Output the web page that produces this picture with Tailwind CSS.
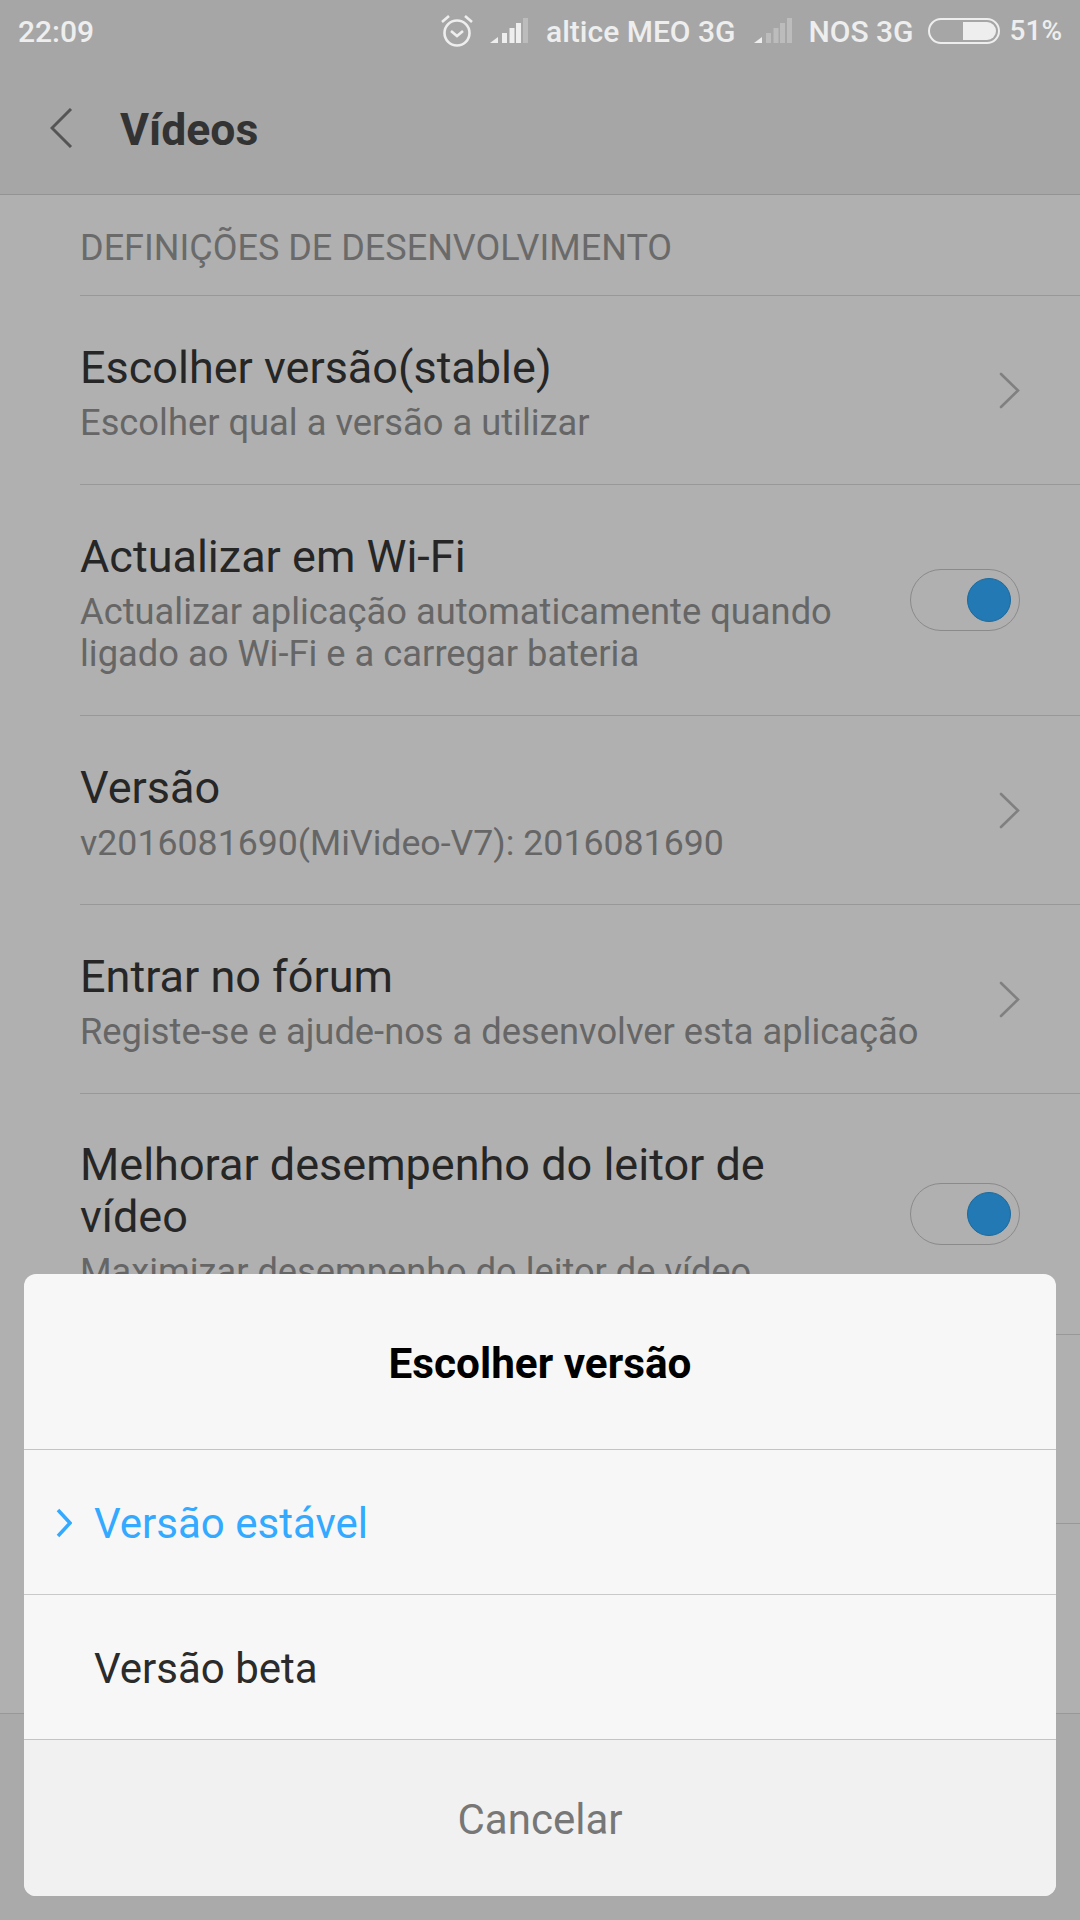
<!DOCTYPE html>
<html><head><meta charset="utf-8"><script src="https://cdn.jsdelivr.net/npm/@tailwindcss/browser@4"></script></head>
<body class="m-0">
<div class="relative w-[1080px] h-[1920px] overflow-hidden bg-[#b0b0b0] font-['Roboto',sans-serif] flex flex-col">
  <div class="h-[195px] shrink-0 bg-[#a6a6a6] border-b border-[#939393]">
    <div class="h-[60px] flex items-center pl-[18px] pr-[18px] pt-[2px] text-[#eeeeee] font-medium">
      <span class="text-[30px]">22:09</span>
      <div class="ml-auto flex items-center">
        <svg class="w-[34px] h-[34px] mr-[16px]" viewBox="0 0 34 34" fill="none" stroke="#eeeeee" stroke-width="2.6"><circle cx="17" cy="19" r="12.5"/><path d="m11 17 6 5 6-5M2 8l7-6M32 8l-7-6"/></svg>
        <svg class="w-[38px] h-[26px] mr-[18px]" viewBox="0 0 38 26" fill="#eeeeee"><path d="M0 25 8 19V25Z"/><rect x="12" y="15" width="5" height="10"/><rect x="19.500" y="10" width="5" height="15"/><rect x="26" y="5" width="5" height="20"/><rect x="33" y="0" width="5" height="25" opacity=".3"/></svg>
        <span class="text-[30px]">altice MEO 3G</span>
        <svg class="w-[38px] h-[26px] ml-[19px] mr-[16px]" viewBox="0 0 38 26" fill="#eeeeee"><path d="M0 25 8 19V25Z"/><rect x="12" y="15" width="5" height="10" opacity=".3"/><rect x="19.500" y="10" width="5" height="15" opacity=".3"/><rect x="26" y="5" width="5" height="20" opacity=".3"/><rect x="33" y="0" width="5" height="25" opacity=".3"/></svg>
        <span class="text-[30px]">NOS 3G</span>
        <div class="ml-[14px] mr-[10px] w-[72px] h-[26px] rounded-full border-2 border-[#eeeeee] p-[2px] flex justify-end"><div class="w-[33px] h-full bg-[#eeeeee] rounded-r-full"></div></div>
        <span class="text-[28px]">51%</span>
      </div>
    </div>
    <div class="h-[134px] flex items-center pl-[50px]">
      <svg class="w-[23px] h-[40px] mt-[2px]" viewBox="0 0 23 40" fill="none" stroke="#555" stroke-width="3"><path d="M21 1 2 20l19 19"/></svg>
      <span class="ml-[47px] pt-[7px] text-[44.500px] font-bold text-[#333]">Vídeos</span>
    </div>
  </div>
  <div class="pl-[80px] shrink-0">
    <div class="h-[101px] flex items-center border-b border-[#989898] text-[36px] text-[#6a6a6a] pt-[5px]">DEFINIÇÕES DE DESENVOLVIMENTO</div>
    <div class="h-[189px] pr-[60px] flex items-center justify-between border-b border-[#989898]">
      <div class="pt-[6px]"><div class="text-[45px] leading-[52px] text-[#262626]">Escolher versão(stable)</div><div class="text-[36.300px] leading-[42px] mt-[8px] text-[#666]">Escolher qual a versão a utilizar</div></div>
      <svg class="w-[21px] h-[37px]" viewBox="0 0 21 37" fill="none" stroke="#808080" stroke-width="2.6" stroke-linecap="round"><path d="m2 2 17 16.500L2 35"/></svg>
    </div>
    <div class="h-[231px] pr-[60px] flex items-center justify-between border-b border-[#989898]">
      <div class="pt-[6px]"><div class="text-[45px] leading-[52px] text-[#262626]">Actualizar em Wi-Fi</div><div class="text-[36.300px] leading-[42px] mt-[8px] text-[#666]">Actualizar aplicação automaticamente quando<br>ligado ao Wi-Fi e a carregar bateria</div></div>
      <div class="w-[110px] h-[62px] rounded-full border border-[#8a8a8a] flex items-center justify-end pr-[8px]"><div class="w-[44px] h-[44px] rounded-full bg-[#2279b3] border border-[#1c6a9e]"></div></div>
    </div>
    <div class="h-[189px] pr-[60px] flex items-center justify-between border-b border-[#989898]">
      <div class="pt-[6px]"><div class="text-[45px] leading-[52px] text-[#262626]">Versão</div><div class="text-[35.700px] leading-[42px] mt-[8px] text-[#666]">v2016081690(MiVideo-V7): 2016081690</div></div>
      <svg class="w-[21px] h-[37px]" viewBox="0 0 21 37" fill="none" stroke="#808080" stroke-width="2.6" stroke-linecap="round"><path d="m2 2 17 16.500L2 35"/></svg>
    </div>
    <div class="h-[189px] pr-[60px] flex items-center justify-between border-b border-[#989898]">
      <div class="pt-[6px]"><div class="text-[45px] leading-[52px] text-[#262626]">Entrar no fórum</div><div class="text-[36.300px] leading-[42px] mt-[8px] text-[#666]">Registe-se e ajude-nos a desenvolver esta aplicação</div></div>
      <svg class="w-[21px] h-[37px]" viewBox="0 0 21 37" fill="none" stroke="#808080" stroke-width="2.6" stroke-linecap="round"><path d="m2 2 17 16.500L2 35"/></svg>
    </div>
    <div class="h-[241px] pr-[60px] flex items-start justify-between pt-[45px] border-b border-[#989898]">
      <div><div class="text-[45px] leading-[52px] text-[#262626]">Melhorar desempenho do leitor de<br>vídeo</div><div class="text-[36.200px] leading-[42px] mt-[8px] text-[#666]">Maximizar desempenho do leitor de vídeo</div></div>
      <div class="mt-[44px] w-[110px] h-[62px] rounded-full border border-[#8a8a8a] flex items-center justify-end pr-[8px]"><div class="w-[44px] h-[44px] rounded-full bg-[#2279b3] border border-[#1c6a9e]"></div></div>
    </div>
    <div class="h-[189px] border-b border-[#989898]"></div>
  </div>
  <div class="h-[189px] shrink-0 "></div>
  <div class="flex-1 bg-[#aaaaaa] border-t border-[#989898]"></div>
  <div class="absolute left-[24px] top-[1274px] w-[1032px] h-[622px] rounded-[12px] overflow-hidden bg-[#f7f7f7] flex flex-col">
    <div class="h-[176px] shrink-0 flex items-center justify-center pt-[4px] text-[42.300px] font-bold text-black border-b border-[#c4c4c4]">Escolher versão</div>
    <div class="h-[145px] shrink-0 flex items-center border-b border-[#c9c9c9] pl-[32px] pt-[2px] text-[42px] text-[#33a9ff]">
      <svg class="w-[16px] h-[30px] mr-[22px]" viewBox="0 0 16 30" fill="none" stroke="#33a9ff" stroke-width="3.500"><path d="m2 2 12 13L2 28"/></svg>Versão estável</div>
    <div class="h-[145px] shrink-0 flex items-center border-b border-[#c4c4c4] pl-[70px] pt-[2px] text-[42px] text-[#2b2b2b]">Versão beta</div>
    <div class="flex-1 bg-[#f1f1f1] flex items-center justify-center pt-[3px] text-[42px] text-[#777]">Cancelar</div>
  </div>
</div>
</body></html>
